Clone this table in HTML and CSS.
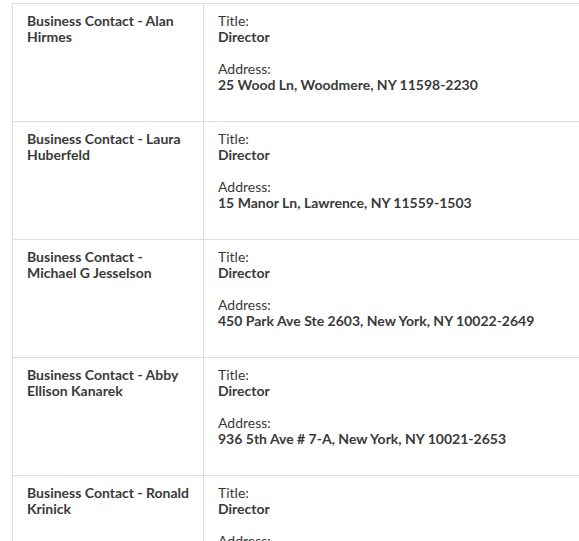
FILE: index.html
```html
<!DOCTYPE html>
<html>
<head>
<meta charset="utf-8">
<link rel="stylesheet" href="styles.css">
</head>
<body>
<div class="wrap">
<table class="contacts">
  <tr>
    <td class="name">Business Contact - Alan Hirmes</td>
    <td class="info">
      <div class="field"><span class="label">Title:</span><span class="value">Director</span></div>
      <div class="field"><span class="label">Address:</span><span class="value">25 Wood Ln, Woodmere, NY 11598-2230</span></div>
    </td>
  </tr>
  <tr>
    <td class="name">Business Contact - Laura Huberfeld</td>
    <td class="info">
      <div class="field"><span class="label">Title:</span><span class="value">Director</span></div>
      <div class="field"><span class="label">Address:</span><span class="value">15 Manor Ln, Lawrence, NY 11559-1503</span></div>
    </td>
  </tr>
  <tr>
    <td class="name">Business Contact - Michael G Jesselson</td>
    <td class="info">
      <div class="field"><span class="label">Title:</span><span class="value">Director</span></div>
      <div class="field"><span class="label">Address:</span><span class="value">450 Park Ave Ste 2603, New York, NY 10022-2649</span></div>
    </td>
  </tr>
  <tr>
    <td class="name">Business Contact - Abby Ellison Kanarek</td>
    <td class="info">
      <div class="field"><span class="label">Title:</span><span class="value">Director</span></div>
      <div class="field"><span class="label">Address:</span><span class="value">936 5th Ave # 7-A, New York, NY 10021-2653</span></div>
    </td>
  </tr>
  <tr>
    <td class="name">Business Contact - Ronald Krinick</td>
    <td class="info">
      <div class="field"><span class="label">Title:</span><span class="value">Director</span></div>
      <div class="field"><span class="label">Address:</span><span class="value">110 E 59th St, New York, NY 10022-1304</span></div>
    </td>
  </tr>
</table>
</div>
</body>
</html>
```

FILE: styles.css
```css
html, body {
  margin: 0;
  padding: 0;
  background: #fff;
}
body {
  font-family: Lato, "Open Sans", sans-serif;
  font-size: 14px;
  line-height: 16px;
  color: #3a3a3a;
  overflow: hidden;
}
.wrap {
  padding: 3px 0 0 12px;
  overflow: hidden;
}
.contacts {
  border-collapse: collapse;
  width: 640px;
  table-layout: fixed;
}
.contacts td {
  border: 1px solid #ddd;
  vertical-align: top;
  height: 118px;
  box-sizing: border-box;
}
.name {
  width: 191px;
  padding: 9px 12px 9px 14px;
  font-weight: 700;
}
.info {
  padding: 9px 14px;
}
.field {
  display: flex;
  flex-direction: column;
  margin-bottom: 16px;
}
.label {
  font-weight: 400;
}
.value {
  font-weight: 700;
}
```
